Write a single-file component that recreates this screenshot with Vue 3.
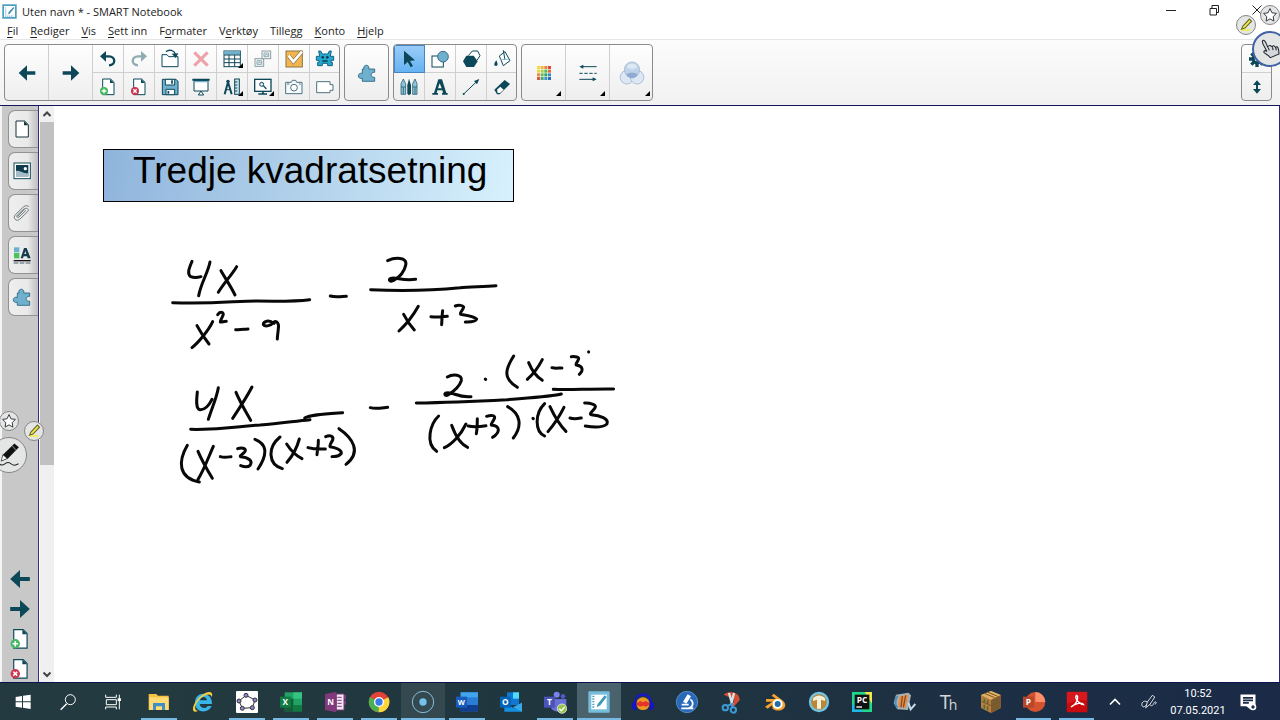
<script setup>
const D = '#0c4858'
const L = '#6fb0cf'

const page = `<path d="M-16-24H8L18-14V23H-16Z" fill="#fff" stroke="${D}" stroke-width="3"/><path d="M6-24L18-12H6Z" fill="${D}"/>`
const puzzle = `<path d="M-14-12H-9C-14-27 10-27 5-12H23V-2C9-4 9 15 23 13V25H-14V16C-30 20-30-3-14 1Z" fill="${L}" stroke="#24627a" stroke-width="2.5"/>`
const arrow = `<path d="M-25 0L0-23V-5H25V5H0V23Z" fill="${D}"/>`
const art = {
  logo: '<rect x="-22" y="-22" width="44" height="44" fill="#fff" stroke="#4d9fc0" stroke-width="6"/><path d="M-13-14V16H14" fill="none" stroke="#75b9d6" stroke-width="4" stroke-dasharray="4 3"/><path d="M14-16L-3 2L-5 10L2 6L17-12Z" fill="#438fb0"/>',
  back: arrow,
  forward: `<g transform="scale(-1 1)">${arrow}</g>`,
  undo: `<path d="M-12-8H3C24-7 24 18 3 19" fill="none" stroke="${D}" stroke-width="7"/><path d="M-24-8L-6-24V8Z" fill="${D}"/>`,
  redo: '<path d="M12-8H-3C-24-7-24 18-3 19" fill="none" stroke="#8fabb3" stroke-width="7"/><path d="M24-8L6-24V8Z" fill="#8fabb3"/>',
  open: `<path d="M-24 23V-13h15l5 6H24V23Z" fill="#fff" stroke="${D}" stroke-width="3"/><path d="M-12-22C-2-30 12-26 16-15" fill="none" stroke="${D}" stroke-width="4"/><path d="M5-16L25-17L17-3Z" fill="${D}"/>`,
  remove: '<path d="M-20-20L20 20M20-20L-20 20" stroke="#eda1a9" stroke-width="9"/>',
  table: `<rect x="-24" y="-24" width="49" height="47" fill="#fff" stroke="${D}" stroke-width="3"/><path d="M-23-23H24V-13H-23Z" fill="${L}"/><path d="M-24-12H24M-24 0H24M-24 11H24M-9-12V23M8-12V23" stroke="${D}" stroke-width="3"/>`,
  clone: '<g fill="#f4f7f8" stroke="#8d9da3" stroke-width="3"><rect x="-24" y="-1" width="26" height="23"/><rect x="-3" y="-24" width="26" height="23"/></g><path d="M-18 5h14v11h-14ZM3-18H17V-7H3Z" fill="none" stroke="#8faab4" stroke-width="3"/><path d="M-16 14l5-6l3 4l4-3M5-9l5-6l3 4l4-3" fill="none" stroke="#8faab4" stroke-width="3"/>',
  check: '<rect x="-24" y="-24" width="49" height="48" fill="#f2b64f" stroke="#8e7445" stroke-width="3"/><path d="M-16-10L-2 8L24-22" fill="none" stroke="#8e7445" stroke-width="12"/><path d="M-16-10L-2 8L24-22" fill="none" stroke="#fff" stroke-width="8"/>',
  monster: '<path d="M-19-24h6l5 9H8l5-9h6l-3 16h10V4H18V10h4v10H8V13H-8v7H-22V10h4V4H-26V-8h10Z" fill="#26a9d0" stroke="#146480" stroke-width="3"/><circle cx="-7" cy="-5" r="4" fill="#0c3c50"/><circle cx="7" cy="-5" r="4" fill="#0c3c50"/><path d="M-8 6H8" stroke="#0c3c50" stroke-width="4"/>',
  add: `${page}<circle cx="-12" cy="12" r="12" fill="#45b863"/><path d="M-19 12H-5M-12 5V19" stroke="#fff" stroke-width="4"/>`,
  del: `${page}<circle cx="-12" cy="12" r="12" fill="#cf3550"/><path d="M-17 7L-7 17M-7 7L-17 17" stroke="#fff" stroke-width="4"/>`,
  save: `<path d="M-23-23H18L24-17V23H-23Z" fill="${L}" stroke="${D}" stroke-width="3"/><path d="M-14-23H14V-6H-14ZM-12 23V7H14V23Z" fill="#f5fbfd" stroke="${D}" stroke-width="3"/><path d="M6-20V-10M-5 12v8" stroke="${D}" stroke-width="5"/>`,
  shade: `<path d="M-21-20V12H21V-20Z" fill="#fff" stroke="${D}" stroke-width="3"/><path d="M-26-22H26" stroke="${D}" stroke-width="6"/><path d="M-20-16H20" stroke="${L}" stroke-width="4"/><path d="M0 12L-8 24H8Z" fill="#fff" stroke="${D}" stroke-width="3"/>`,
  measure: `<path d="M-12-15L-22 22M-12-15L-1 22" stroke="${D}" stroke-width="6"/><path d="M-20 8H-5" stroke="${D}" stroke-width="3"/><circle cx="-12" cy="-17" r="5" fill="${D}"/><rect x="8" y="-24" width="14" height="46" fill="#cfe3eb" stroke="${D}" stroke-width="3"/><path d="M9-15h7M9-6h7M9 3h7M9 12h7" stroke="${D}" stroke-width="3"/>`,
  monitor: `<rect x="-25" y="-23" width="49" height="36" fill="#fff" stroke="${D}" stroke-width="4"/><path d="M-14 21H12M0 13V21" stroke="${D}" stroke-width="5"/><circle cx="-4" cy="-8" r="6" fill="#d8edf5" stroke="${D}" stroke-width="3"/><path d="M1-4L10 6" stroke="${D}" stroke-width="4"/>`,
  camera: '<path d="M-25-14H-8l3-6H5l3 6H24V20H-25Z" fill="#f3fafd" stroke="#4f7180" stroke-width="3"/><circle cy="2" r="10" fill="#fff" stroke="#4f7180" stroke-width="3"/><path d="M-21-9h7M15-9h5" stroke="#4f7180" stroke-width="3"/>',
  video: '<path d="M-25-16H15V-7H24V10H15V17H-25Z" fill="#fff" stroke="#4f7180" stroke-width="3" stroke-linejoin="round"/>',
  puzzle,
  select: `<path d="M-15-25L18 4L3 6L12 21L5 25L-4 9L-15 18Z" fill="${D}"/>`,
  shape: `<rect x="-24" y="-9" width="34" height="33" fill="#fff" stroke="${D}" stroke-width="3"/><circle cx="9" cy="-7" r="16" fill="${L}" stroke="#376f87" stroke-width="3"/>`,
  polygon: `<path d="M-8-10L4-24H20L27-10L18 4" fill="#fff" stroke="${D}" stroke-width="3"/><path d="M-14-10H8L20 7L9 24H-14L-24 7Z" fill="${D}"/>`,
  fill: `<path d="M-8-9L9-22L24 5L4 20Z" fill="#fff" stroke="${D}" stroke-width="3"/><path d="M4-26L9 3" stroke="${D}" stroke-width="3"/><path d="M-7 1L21 1" stroke="#88bfd3" stroke-width="3"/><path d="M-17 4C-27 17-23 21-18 21C-12 21-12 15-17 4Z" fill="${D}"/>`,
  pens: `<path d="M-24-10L-17-24L-10-10V22H-24Z" fill="#8fc3da" stroke="${D}" stroke-width="2"/><path d="M-5-5L0-25L6-5V20L0 25L-5 20Z" fill="${D}"/><path d="M11-10L18-24L24-10V22H11Z" fill="#8fc3da" stroke="${D}" stroke-width="2"/><path d="M-24 0H-10M11 0H24M-17 1V21M18 1V21" stroke="${D}" stroke-width="2"/>`,
  text: `<path d="M-5-23H6L19 18H23V23H6V18H9L7 10H-8L-10 18H-6V23H-23V18H-18Z" fill="${D}"/><path d="M-1-11L5 4H-6Z" fill="#f4f4f4"/>`,
  line: `<path d="M-22 21L20-19" stroke="${D}" stroke-width="3"/><circle cx="-22" cy="21" r="3" fill="${D}"/><path d="M25-24L9-18L18-8Z" fill="${D}"/>`,
  eraser: `<path d="M-23 8L8-21L24-9L-7 22H-15Z" fill="${D}"/><path d="M-15 8L-5-1L5 8L-6 18H-13Z" fill="#fff"/>`,
  colors: [['#f3d84a', '#f0b53c', '#e9813d', '#d94c3c'], ['#e7d845', '#b4cf44', '#58b84e', '#e46a35'], ['#ee8748', '#65bd5a', '#35a260', '#3a8bc5'], ['#d95b3e', '#46a876', '#3b93c9', '#2d6fae']]
    .map((r, y) => r.map((c, x) => `<rect x="${-21 + x * 11}" y="${-21 + y * 11}" width="9" height="9" fill="${c}"/>`).join('')).join(''),
  lines: `<path d="M-18-19H26M-26 19H18" stroke="${D}" stroke-width="3"/><path d="M-26 1H26" stroke="${D}" stroke-width="3" stroke-dasharray="10 5"/><path d="M-26-19L-14-25V-13ZM26 19L14 13V25Z" fill="${D}"/>`,
  venn: '<g stroke="#a3b7cf" stroke-width="2"><circle cx="-12" cy="10" r="16" fill="#dce7f4"/><circle cx="12" cy="10" r="16" fill="#dce7f4"/><circle cx="0" cy="-8" r="18" fill="#b9cfe8" fill-opacity=".85"/></g><path d="M-14 4C-8-2 8-2 14 4C8 15-8 15-14 4Z" fill="#8facd0"/><ellipse cx="0" cy="-16" rx="11" ry="6" fill="#e2edf8" fill-opacity=".8"/>',
  gear: `<g fill="${D}"><circle r="16"/><path d="M-5-24H5V24H-5ZM-24-5V5H24V-5Z"/><path d="M-5-24H5V24H-5ZM-24-5V5H24V-5Z" transform="rotate(45)"/></g><circle r="7" fill="#f7f7f7"/>`,
  height: `<path d="M0-20L12-6H3V6H12L0 20L-12 6H-3V-6H-12Z" fill="${D}"/>`,
  page: `<path d="M-18-24H8L19-13V24H-18Z" fill="#fff" stroke="#17343f" stroke-width="3"/><path d="M6-24L19-11H6Z" fill="#17343f"/>`,
  gallery: `<rect x="-24" y="-24" width="49" height="47" fill="#fff" stroke="${D}" stroke-width="3"/><rect x="-18" y="-18" width="37" height="34" fill="#103a4d"/><path d="M-18 0C-4-4 2 10 19 6V16H-18Z" fill="#a3bcc7"/><circle cx="10" cy="-7" r="5" fill="#fff"/>`,
  clip: '<path d="M-12 9L8-12C14-18 23-11 17-4L-7 19C-17 27-29 15-20 5L3-17C11-25 19-22 21-18M12-8L-9 12C-15 16-18 10-14 6L8-14" fill="none" stroke="#6f7a7e" stroke-width="3"/>',
  props: `<rect x="-24" y="-23" width="16" height="15" fill="${L}"/><rect x="-24" y="-6" width="16" height="16" fill="#4bc35b"/><path d="M-4 10L6-21H14L26 10H17L15 4H5L3 10ZM7-3H13L10-12Z" fill="#173d4d" fill-rule="evenodd"/><path d="M-25 17H26" stroke="#111" stroke-width="4"/><path d="M-25 24H26" stroke="#7d8d94" stroke-width="5" stroke-dasharray="14 4"/>`,
  star: '<path d="M0-20L6-7L20-5L10 5L12 19L0 12L-12 19L-10 5L-20-5L-6-7Z" fill="#fff" stroke="#30343a" stroke-width="3"/>',
  marker: '<path d="M-15 14H12" stroke="#f5f04a" stroke-width="5"/><path d="M10-17L16-11L-3 9L-13 12L-9 3Z" fill="#f3ea43" stroke="#63642e" stroke-width="3"/>',
  pen: '<path d="M16-34L29-23L-3 10L-21 17L-18-1Z" fill="#111"/><path d="M-18-1L-5 10L-23 18Z" fill="#fff" stroke="#222" stroke-width="2"/><path d="M10-26L20-15" stroke="#777" stroke-width="3"/><path d="M-27 27C-16 38-9 15 3 24S16 31 28 26" fill="none" stroke="#222" stroke-width="3"/>',
  hand: '<path d="M-22-23C-18-29-12-22-7-6C0-14 3-8 6-6C11-13 14-7 16-4C22-11 25-2 26 14L1 25C-5 15-16 14-18 9C-17 3-11 4-9 7C-15-6-23-14-22-23Z" fill="#d6d8dc" stroke="#20252d" stroke-width="3"/><path d="M-5-4L-2 4M7-5L9 3M17-3L18 4" stroke="#20252d" stroke-width="3"/>',
  windows: '<path d="M-22-15L-3-18V-2H-22ZM0-19L23-22V-2H0ZM-22 1H-3V17L-22 14ZM0 1H23V21L0 17Z" fill="#fff"/>',
  search: '<circle cx="7" cy="-7" r="15" fill="none" stroke="#fff" stroke-width="3"/><path d="M-4 5L-22 23" stroke="#fff" stroke-width="4"/>',
  tasks: '<path d="M-22-22V-14H10V-22M-22 22V15H10V22M-20-7H10V8H-20ZM19-22V22" fill="none" stroke="#fff" stroke-width="3"/><path d="M14-11H24V-3H14Z" fill="#fff"/>',
  folder: '<path d="M-31-24H-8L-3-19H29V24H-31Z" fill="#f5bf41"/><path d="M-29-14H29V24H-29Z" fill="#ffda75"/><path d="M-18 24V3H18V24H9V13H-9V24Z" fill="#3e8fc4"/>',
  ie: '<path d="M27 6H-10C-8 21 10 21 14 12H26C17 36-24 34-24 2C-24-34 28-34 27 6ZM-9-5H12C9-18-6-18-9-5Z" fill="#3ab5e8" fill-rule="evenodd"/><path d="M-15 27C-40 38-32 4-7-17C12-34 34-35 26-14C25-27 9-24-7-11C-24 5-30 24-15 27Z" fill="#f7cf3e"/>',
  geo: '<rect x="-33" y="-33" width="66" height="66" rx="3" fill="#fff"/><path d="M-3-20L24-6L16 17L-14 19L-24-3Z" fill="none" stroke="#333" stroke-width="3"/><g fill="#8887d0" stroke="#333" stroke-width="3"><circle cx="-3" cy="-20" r="6"/><circle cx="24" cy="-6" r="6"/><circle cx="16" cy="17" r="6"/><circle cx="-14" cy="19" r="6"/><circle cx="-24" cy="-3" r="6"/></g>',
  excel: '<rect x="-19" y="-29" width="52" height="57" fill="#21a366"/><path d="M7-29H33V-10H7Z" fill="#33c481"/><path d="M-19-10H7V28H-19Z" fill="#185c37"/><path d="M7 9H33V28H7Z" fill="#107c41"/><rect x="-33" y="-16" width="33" height="33" fill="#107c41"/><text x="-17" y="9" class="app-letter">X</text>',
  onenote: '<path d="M-30-24L4-31V31L-30 24Z" fill="#80397b"/><path d="M4-24H27V24H4Z" fill="#f4e9f3" stroke="#80397b" stroke-width="3"/><path d="M7-14H20M7-5H20M7 4H20M7 13H20" stroke="#80397b" stroke-width="3"/><path d="M27-21H33V-8H27ZM27-4H33V8H27Z" fill="#80397b"/><text x="-13" y="9" class="app-letter">N</text>',
  chrome: '<circle r="31" fill="#e34337"/><path d="M0 0L-27-15A31 31 0 0 0-1 31L14 6Z" fill="#4caf50"/><path d="M0 0L28-14A31 31 0 0 1-1 31Z" fill="#fdd63c"/><circle r="15" fill="#fff"/><circle r="11" fill="#397be8"/>',
  record: '<circle r="32" fill="none" stroke="#86bddc" stroke-width="3"/><circle r="11" fill="#74c1ee"/>',
  word: '<rect x="-19" y="-29" width="52" height="57" fill="#2b7cd3"/><path d="M-19-29H33V-14H-19Z" fill="#41a5ee"/><path d="M-19 9H33V28H-19Z" fill="#103f91"/><rect x="-33" y="-16" width="33" height="33" fill="#185abd"/><text x="-17" y="8" class="app-letter small">W</text>',
  outlook: '<path d="M-12-29H24V9H-12Z" fill="#0f78d4"/><path d="M6-29H24V-10H6Z" fill="#50d9ff"/><path d="M-20 2L7 17L33 2V29H-20Z" fill="#1490df"/><path d="M7 15L33 2V29Z" fill="#38a9e8"/><rect x="-33" y="-16" width="33" height="33" fill="#0364b8"/><text x="-17" y="9" class="app-letter">O</text>',
  teams: '<circle cx="5" cy="-22" r="9" fill="#7b83eb"/><circle cx="24" cy="-17" r="7" fill="#5059c9"/><path d="M-11-9H34V10C34 30 2 35-11 20Z" fill="#6870d5"/><rect x="-33" y="-16" width="33" height="33" fill="#4b53bc"/><text x="-17" y="9" class="app-letter">T</text><circle cx="21" cy="20" r="14" fill="#94c349" stroke="#fff" stroke-width="2"/><path d="M13 20L19 26L29 15" fill="none" stroke="#fff" stroke-width="4"/>',
  notebook: '<rect x="-32" y="-32" width="64" height="64" rx="3" fill="#76bddb"/><rect x="-23" y="-22" width="46" height="44" fill="#fff"/><path d="M-17-19V18" stroke="#4d9fc0" stroke-width="6" stroke-dasharray="4 4"/><path d="M17-20L-4 6L-7 16L4 10L23-15Z" fill="#4097ba"/>',
  audacity: '<ellipse cy="5" rx="20" ry="19" fill="#ef9925"/><path d="M-19 3L-8-3L0 1L8-3L19 3V9L8 14L0 11L-8 14L-19 9Z" fill="#e6332a"/><path d="M-24 12C-30-34 30-34 24 12" fill="none" stroke="#1818c4" stroke-width="7"/><path d="M-32 2H-20V25C-35 25-33 12-32 2ZM32 2H20V25C35 25 33 12 32 2Z" fill="#1613c9"/>',
  scope: '<circle r="32" fill="#2868b9" stroke="#72a6dc" stroke-width="2"/><path d="M2-23L12-17L-2 5L-12-1Z" fill="#fff"/><path d="M-16 8H5M-17 19H19M10-8C22 0 18 17 5 18" fill="none" stroke="#fff" stroke-width="5"/>',
  snip: '<path d="M-22-22C-5-38 28-29 26-5L7 15L-1 8C18-2 7-20-7-15Z" fill="#d34c36"/><path d="M-6-27L4 8M9-27L0 9" stroke="#d9e3e8" stroke-width="7"/><g fill="none" stroke="#3d9bd5" stroke-width="6"><circle cx="-17" cy="17" r="8"/><circle cx="7" cy="24" r="8"/><path d="M-10 11L3 6L4 16"/></g>',
  blender: '<path d="M-30 14L-8-1H-27V-9H3L-10-19L-4-25L24-4C45 17 13 35-7 20L-9 10L-22 20Z" fill="#f5a12c"/><circle cx="8" cy="6" r="15" fill="#fff"/><circle cx="8" cy="6" r="9" fill="#236ba4"/>',
  top: '<circle r="27" fill="#b98735" stroke="#72c3e4" stroke-width="7"/><path d="M-18-11C-8-22 7-23 18-11V-3L6-7V20H-6V-7L-18-3Z" fill="#f5f1d8"/>',
  pycharm: '<path d="M-30-30H30V30H-30Z" fill="#21d789"/><path d="M8-30H30V5Z" fill="#f2e84c"/><path d="M-30 5V30H5Z" fill="#20b7e6"/><rect x="-22" y="-22" width="44" height="44" fill="#111"/><text x="0" y="2" class="app-letter">PC</text><path d="M-17 15H0" stroke="#fff" stroke-width="4"/>',
  reel: '<path d="M-27-22L10-28L18-20L9 24L-23 22L-34 3Z" fill="#a7b1b3"/><path d="M-18-16L10-22L2 17L-20 15Z" fill="#f08a39"/><path d="M-8-18L-12 16M2-20L-5 16" stroke="#7a4f38" stroke-width="4"/><path d="M-22-18C-32-6-30 10-22 17" fill="none" stroke="#4b91c0" stroke-width="6"/><path d="M10 2L17 22L31 6" fill="none" stroke="#c1dce8" stroke-width="6"/>',
  thonny: '<text x="-8" y="22" class="thin-letter">T</text><text x="15" y="24" class="thin-letter lower">h</text>',
  block: '<path d="M0-33L29-21V18L0 33L-30 18V-21Z" fill="#b5803f"/><path d="M0-7V33L29 18V-21Z" fill="#89562d"/><path d="M0-33L29-21L0-7L-30-21Z" fill="#dfb266"/><path d="M-20-10V2M-10-6V7M-20 8V20M-10 13V25M10-5V8M20-9V3M10 13V25M20 8V20" stroke="#5b6a35" stroke-width="5"/><path d="M-29-2L0 11L29-2M-20-26L11-13M-11-30L20-17" fill="none" stroke="#7b5428" stroke-width="3"/>',
  powerpoint: '<circle cx="4" r="30" fill="#d35230"/><path d="M4-30A30 30 0 0 1 34 0H4Z" fill="#ff8f6b"/><rect x="-33" y="-16" width="33" height="33" fill="#b7472a"/><text x="-17" y="9" class="app-letter">P</text>',
  acrobat: '<rect x="-31" y="-31" width="62" height="62" rx="3" fill="#c90b10"/><path d="M-30-30H30V-4C6-10-8 0-30 5Z" fill="#e4282d" opacity=".5"/><path d="M-18 15C3 5 4-18-1-20C-9-14 5 7 20 8C17 0-5 3-18 15Z" fill="none" stroke="#fff" stroke-width="4"/>'
}

const menus = [['', 'F', 'il'], ['', 'R', 'ediger'], ['', 'V', 'is'], ['', 'S', 'ett inn'], ['F', 'o', 'rmater'], ['V', 'e', 'rktøy'], ['Tille', 'g', 'g'], ['', 'K', 'onto'], ['', 'H', 'jelp']]

const nav = [{ i: 'back', t: 'Forrige side' }, { i: 'forward', t: 'Neste side' }]
const fileTools = [
  { i: 'undo', t: 'Angre' }, { i: 'redo', t: 'Gjør om' }, { i: 'open', t: 'Åpne' }, { i: 'remove', t: 'Slett' },
  { i: 'table', t: 'Tabell', m: true }, { i: 'clone', t: 'Klon' }, { i: 'check', t: 'Vurdering' }, { i: 'monster', t: 'Aktivitet' },
  { i: 'add', t: 'Ny side' }, { i: 'del', t: 'Slett side' }, { i: 'save', t: 'Lagre' }, { i: 'shade', t: 'Skjermskjuler' },
  { i: 'measure', t: 'Måleverktøy', m: true }, { i: 'monitor', t: 'Visning', m: true }, { i: 'camera', t: 'Skjermbilde' }, { i: 'video', t: 'Opptak' }
]
const drawTools = [
  { i: 'select', t: 'Merk', on: true }, { i: 'shape', t: 'Former' }, { i: 'polygon', t: 'Mangekanter' }, { i: 'fill', t: 'Fyll' },
  { i: 'pens', t: 'Penner' }, { i: 'text', t: 'Tekst' }, { i: 'line', t: 'Linjer' }, { i: 'eraser', t: 'Viskelær' }
]
const styleTools = [{ i: 'colors', t: 'Farge', m: true }, { i: 'lines', t: 'Linjestil', m: true }, { i: 'venn', t: 'Gjennomsiktighet', m: true }]
const endTools = [{ i: 'gear', t: 'Innstillinger' }, { i: 'height', t: 'Flytt verktøylinje' }]

const tabs = [{ i: 'page', t: 'Sider' }, { i: 'gallery', t: 'Galleri' }, { i: 'clip', t: 'Vedlegg' }, { i: 'props', t: 'Egenskaper' }, { i: 'puzzle', t: 'Tillegg' }]
const pageTools = [{ i: 'back', t: 'Forrige' }, { i: 'forward', t: 'Neste' }, { i: 'add', t: 'Legg til side' }, { i: 'del', t: 'Fjern side' }]

const system = [{ i: 'windows', t: 'Start' }, { i: 'search', t: 'Søk' }, { i: 'tasks', t: 'Oppgavevisning' }]
const apps = [
  { i: 'folder', t: 'Filutforsker', r: true }, { i: 'ie', t: 'Internet Explorer' }, { i: 'geo', t: 'GeoGebra', r: true },
  { i: 'excel', t: 'Excel', r: true }, { i: 'onenote', t: 'OneNote', r: true }, { i: 'chrome', t: 'Chrome', r: true },
  { i: 'record', t: 'Opptaker', r: true, dim: true }, { i: 'word', t: 'Word', r: true }, { i: 'outlook', t: 'Outlook' },
  { i: 'teams', t: 'Teams', r: true }, { i: 'notebook', t: 'SMART Notebook', r: true, on: true }, { i: 'audacity', t: 'Audacity' },
  { i: 'scope', t: 'Mikroskop' }, { i: 'snip', t: 'Utklippsverktøy' }, { i: 'blender', t: 'Blender' }, { i: 'top', t: 'Tracker' },
  { i: 'pycharm', t: 'PyCharm' }, { i: 'reel', t: 'Filmverktøy' }, { i: 'thonny', t: 'Thonny' }, { i: 'block', t: 'Minetest' },
  { i: 'powerpoint', t: 'PowerPoint', r: true }, { i: 'acrobat', t: 'Acrobat', r: true }
]

const firstLine = [
  'M96 64C88 84 80 100 92 110C102 114 116 112 123 110M150 66C144 98 122 132 116 167',
  'M183 92C194 112 212 138 225 165M230 80C214 106 190 132 175 157',
  'M38 188C150 193 230 183 290 183C350 184 410 184 449 179',
  'M111 257C122 278 136 298 147 312M158 245C146 271 115 308 96 323',
  'M173 224C180 212 195 216 188 228C186 236 180 240 181 246C187 246 192 244 199 244',
  'M227 269C240 270 250 268 264 267',
  'M342 250C326 238 310 244 310 254C316 262 334 256 340 248C350 240 358 250 355 266C354 280 352 288 352 297',
  'M511 168C524 172 538 170 559 169',
  'M683 62C704 52 744 50 737 76C733 94 720 110 702 121C690 128 684 118 692 115C710 110 726 124 767 118',
  'M632 149C760 155 850 148 900 143C930 139 970 141 1008 137',
  'M731 223C741 242 752 258 763 270M775 199C760 226 738 254 717 273',
  'M813 230C830 233 846 231 862 229M848 212C846 227 846 240 845 254',
  'M886 198C896 194 908 196 911 201C910 210 898 218 902 223C920 226 940 228 950 237C944 248 926 246 916 246'
]
const secondLine = [
  'M82 156C80 176 76 206 90 209C106 210 118 194 126 178M145 143C140 174 124 208 115 238',
  'M198 157C210 186 228 216 242 241M246 141C230 172 206 208 188 235',
  'M62 268C170 270 200 258 270 255C330 250 370 244 420 239',
  'M404 234C420 224 460 222 518 218',
  'M601 203C616 207 632 204 653 202',
  'M52 316C24 364 24 414 88 426M84 334C96 362 112 390 127 415M130 319C116 350 102 390 84 418',
  'M151 350C162 354 170 352 183 350M203 326C218 320 234 328 222 338C216 344 208 348 212 350C234 352 250 362 240 376C232 384 220 380 212 377',
  'M255 298C286 310 298 336 264 387M330 291C292 322 294 374 337 386',
  'M350 312C364 334 380 348 396 356M388 297C380 326 366 350 351 367M414 323C432 328 448 328 466 327M445 301C446 316 442 330 441 344',
  'M467 290C480 284 492 288 488 300C484 308 478 316 480 320C496 322 516 330 514 340C506 352 494 348 486 350M507 266C548 294 576 336 528 373',
  'M832 111C850 100 878 104 874 122C868 140 848 156 834 165C824 170 820 158 832 158C850 156 866 174 903 170',
  'M946 117L947 118M1031 48C1006 88 998 114 1042 142',
  'M1076 68C1086 92 1102 112 1117 121M1117 59C1104 84 1086 106 1072 118M1146 83C1156 86 1164 84 1176 84',
  'M1204 50C1216 48 1228 52 1226 57C1222 66 1216 74 1219 75C1238 78 1242 90 1228 103M1256 35L1256 36',
  'M739 189C850 187 930 183 1010 179C1070 174 1150 169 1174 162',
  'M1150 148C1200 151 1250 146 1331 147',
  'M806 228C782 250 764 310 800 334M845 256C856 286 874 314 893 322M888 252C872 286 844 314 823 323',
  'M895 258C914 262 930 260 948 257M922 236C922 252 922 266 919 281',
  'M950 229C964 224 978 226 973 236C968 248 960 254 966 256C990 258 992 276 968 292M1013 200C1052 222 1058 258 1030 294',
  'M1089 235L1090 236M1124 191C1094 220 1094 274 1124 288',
  'M1140 200C1154 230 1170 256 1188 274M1182 202C1168 230 1150 256 1134 275M1200 234C1212 238 1222 236 1234 234',
  'M1244 189C1260 188 1280 194 1276 202C1270 214 1256 220 1264 224C1290 226 1318 236 1311 252C1300 262 1270 262 1246 258'
]
</script>

<template>
  <div class="screen">
    <header class="titlebar">
      <svg class="logo" viewBox="-26 -26 52 52" v-html="art.logo"></svg>
      <span class="caption">Uten navn * - SMART Notebook</span>
      <div class="window-controls">
        <button aria-label="Minimer"><svg viewBox="0 0 12 12"><path d="M1 6.500H11" /></svg></button>
        <button aria-label="Gjenopprett"><svg viewBox="0 0 12 12"><path d="M2 4.500H8.500V11H2ZM4 4V1.500H10.500V8.500H9" /></svg></button>
        <button aria-label="Lukk"><svg viewBox="0 0 12 12"><path d="M1.500 1.500L10.500 10.500M10.500 1.500L1.500 10.500" /></svg></button>
      </div>
    </header>

    <nav class="menubar">
      <button v-for="m in menus" :key="m.join('')">{{ m[0] }}<u>{{ m[1] }}</u>{{ m[2] }}</button>
    </nav>

    <section class="toolbar">
      <div class="group">
        <div class="wide-cells split">
          <button v-for="b in nav" :key="b.i" class="tool" :aria-label="b.t"><svg class="glyph" viewBox="-33 -33 66 66" v-html="art[b.i]"></svg></button>
        </div>
        <div class="cells eight">
          <button v-for="b in fileTools" :key="b.i" class="tool" :class="{ more: b.m }" :aria-label="b.t"><svg class="glyph" viewBox="-33 -33 66 66" v-html="art[b.i]"></svg></button>
        </div>
      </div>
      <div class="group">
        <div class="wide-cells single">
          <button class="tool" aria-label="Tillegg"><svg class="glyph" viewBox="-33 -33 66 66" v-html="art.puzzle"></svg></button>
        </div>
      </div>
      <div class="group">
        <div class="cells four">
          <button v-for="b in drawTools" :key="b.i" class="tool" :class="{ active: b.on }" :aria-label="b.t"><svg class="glyph" viewBox="-33 -33 66 66" v-html="art[b.i]"></svg></button>
        </div>
      </div>
      <div class="group">
        <div class="wide-cells">
          <button v-for="b in styleTools" :key="b.i" class="tool" :class="{ more: b.m, large: b.i === 'venn' }" :aria-label="b.t"><svg class="glyph" viewBox="-33 -33 66 66" v-html="art[b.i]"></svg></button>
        </div>
      </div>
      <div class="group end">
        <div class="cells one">
          <button v-for="b in endTools" :key="b.i" class="tool" :aria-label="b.t"><svg class="glyph" viewBox="-33 -33 66 66" v-html="art[b.i]"></svg></button>
        </div>
      </div>
    </section>

    <main class="workspace">
      <aside class="sidebar">
        <div class="tabs">
          <button v-for="b in tabs" :key="b.i" class="tab" :aria-label="b.t"><svg class="glyph" viewBox="-33 -33 66 66" v-html="art[b.i]"></svg></button>
        </div>
        <div class="page-tools">
          <button v-for="b in pageTools" :key="b.i" :aria-label="b.t"><svg class="glyph" viewBox="-28 -28 56 56" v-html="art[b.i]"></svg></button>
        </div>
        <button class="bubble left-star" aria-label="Favoritter"><svg viewBox="-28 -28 56 56" v-html="art.star"></svg></button>
        <button class="bubble left-pen" aria-label="Penn"><svg viewBox="-50 -50 100 100" v-html="art.pen"></svg></button>
        <button class="bubble left-marker" aria-label="Merkepenn"><svg viewBox="-26 -26 52 52" v-html="art.marker"></svg></button>
      </aside>
      <div class="scrollbar">
        <button aria-label="Rull opp"><svg viewBox="0 0 14 14"><path d="M3.500 9L7 5.500L10.500 9" /></svg></button>
        <div class="track"><div class="thumb"></div></div>
        <button aria-label="Rull ned"><svg viewBox="0 0 14 14"><path d="M3.500 5.500L7 9L10.500 5.500" /></svg></button>
      </div>
      <article class="canvas">
        <h1>Tredje kvadratsetning</h1>
        <svg class="ink" viewBox="160 240 480 260" role="img" aria-label="4x/(x²−9) − 2/(x+3)">
          <g transform="translate(160 240) scale(.3333)"><path v-for="d in firstLine" :key="d" :d="d" /></g>
          <g transform="translate(170 340) scale(.3333)"><path v-for="d in secondLine" :key="d" :d="d" /></g>
        </svg>
      </article>
    </main>

    <footer class="taskbar">
      <div class="system">
        <button v-for="b in system" :key="b.i" :aria-label="b.t"><svg viewBox="-36 -36 72 72" v-html="art[b.i]"></svg></button>
      </div>
      <div class="apps">
        <button v-for="b in apps" :key="b.i" :class="{ running: b.r, focused: b.on, dim: b.dim }" :aria-label="b.t"><svg viewBox="-36 -36 72 72" v-html="art[b.i]"></svg></button>
      </div>
      <div class="tray">
        <button class="chevron" aria-label="Vis skjulte ikoner"><svg viewBox="0 0 24 24"><path d="M6 15L12 9L18 15" /></svg></button>
        <button class="ink-tool" aria-label="Windows Ink"><svg viewBox="0 0 24 24"><path d="M8 19L10 12L16 4L19 6L13 15L8 19M10 12C5 9 2 14 4 17C5 19 8 17 9 15M13 15C15 18 17 16 18 13C20 10 22 13 19 15" /></svg></button>
        <time datetime="2021-05-07T10:52"><span>10:52</span><span>07.05.2021</span></time>
        <button class="notice" aria-label="Varsler"><svg viewBox="0 0 24 24"><path d="M3 3H21V17H15V21L10 17H3Z" fill="#fff" stroke="none" /><path d="M6 7H18M6 10H18M6 13H13" stroke="#1b2b47" /><circle cx="18" cy="18" r="3" fill="#1b2b47" stroke="#fff" /></svg></button>
      </div>
    </footer>

    <button class="bubble right-star" aria-label="Favoritter"><svg viewBox="-28 -28 56 56" v-html="art.star"></svg></button>
    <button class="bubble right-marker" aria-label="Merkepenn"><svg viewBox="-26 -26 52 52" v-html="art.marker"></svg></button>
    <button class="bubble right-hand" aria-label="Pekeverktøy"><svg viewBox="-46 -46 92 92" v-html="art.hand"></svg></button>
  </div>
</template>

<style>
html, body { overflow: hidden; }
body { margin: 0; }
.app-letter { fill: #fff; font: bold 25px "Open Sans", sans-serif; text-anchor: middle; }
.app-letter.small { font-size: 22px; }
.thin-letter { fill: #d5d8d8; font: 60px "Open Sans", sans-serif; text-anchor: middle; }
.thin-letter.lower { font-size: 42px; }
</style>

<style scoped>
.screen { position: relative; display: flex; flex-direction: column; height: 100vh; overflow: hidden; background: #fff; color: #222; font: 11px "Open Sans", "Noto Sans", sans-serif; }
button { display: flex; align-items: center; justify-content: center; padding: 0; border: 0; background: none; color: inherit; font: inherit; }
svg { display: block; flex: none; }

.titlebar { display: flex; align-items: center; flex: none; height: 22px; padding-left: 2px; }
.logo { width: 15px; height: 15px; }
.caption { margin-left: 5px; font-size: 11px; white-space: nowrap; }
.window-controls { display: flex; height: 20px; margin-left: auto; padding-right: 2px; align-self: flex-start; }
.window-controls button { width: 43px; }
.window-controls svg { width: 12px; height: 12px; fill: none; stroke: #222; stroke-width: 1; }

.menubar { display: flex; flex: none; gap: 12px; height: 17px; padding-left: 7px; border-bottom: 1px solid #e6e6e6; }
.menubar button { white-space: pre; }
.menubar u { text-underline-offset: 2px; }

.toolbar { display: flex; flex: none; gap: 4px; padding: 4px 8px 4px 4px; border-bottom: 1px solid #14145a; background: linear-gradient(#fcfcfc, #f1f1f1); }
.group { display: flex; overflow: hidden; box-sizing: border-box; height: 57px; border: 1px solid #8b8b8b; border-radius: 4px; background: linear-gradient(#fefefe, #eeeeee); }
.end { margin-left: auto; }
.wide-cells { display: grid; grid-auto-flow: column; grid-auto-columns: 44px; margin-right: -2px; }
.wide-cells.split { margin-right: 0; }
.wide-cells.single { margin-right: -1px; }
.cells { display: grid; grid-template-rows: 28px 28px; }
.eight { grid-template-columns: repeat(8, 31px); margin-right: -2px; }
.four { grid-template-columns: repeat(4, 31px); margin-right: -2px; }
.one { grid-template-columns: 31px; margin-right: -2px; }
.tool { position: relative; box-sizing: border-box; border-right: 1px solid #cfcfcf; }
.cells .tool { border-bottom: 1px solid #cfcfcf; }
.wide-cells:last-child .tool:last-child { border-right: 0; }
.glyph { width: 22px; height: 22px; }
.large .glyph { width: 28px; height: 28px; }
.tool.more::after { content: ""; position: absolute; right: 4px; bottom: 4px; border-left: 5px solid transparent; border-bottom: 5px solid #000; }
.tool.active { background: linear-gradient(#9dcdf8, #65b3f2); outline: 1px solid #4684c4; outline-offset: -1px; }

.workspace { display: flex; flex: 1; min-height: 0; }
.sidebar { position: relative; display: flex; flex: none; flex-direction: column; justify-content: space-between; box-sizing: border-box; width: 39px; border-left: 2px solid #f4f4f4; border-right: 1px solid #30307f; background: #c8c8c8; }
.tabs { display: flex; flex-direction: column; gap: 4px; padding: 4px 0 0 6px; }
.tab { box-sizing: border-box; height: 38px; padding-right: 3px; border: 1px solid #929292; border-right: 0; border-radius: 7px 0 0 7px; background: linear-gradient(90deg, #eee, #e9e9e9 65%, #bebebe); }
.page-tools { display: flex; flex-direction: column; margin-bottom: -2px; }
.page-tools button { height: 30px; }

.scrollbar { display: flex; flex: none; flex-direction: column; width: 14px; margin-left: 1px; background: #f0f0f0; }
.scrollbar button { height: 16px; }
.scrollbar svg { width: 14px; height: 14px; fill: none; stroke: #444; stroke-width: 2; }
.track { flex: 1; }
.thumb { height: 63%; background: #c1c1c1; }

.canvas { flex: 1; min-width: 0; overflow: hidden; border-right: 1px solid #26267a; background: #fff; }
h1 { box-sizing: border-box; width: fit-content; height: 53px; margin: 43px 0 0 49px; padding: 0 26px 0 29px; border: 1px solid #000; background: linear-gradient(100deg, #8fb4dc, #b2d2eb 50%, #d8f1fd); color: #000; font: 37px/42px "Liberation Sans", Arial, sans-serif; white-space: nowrap; }
.ink { width: 480px; height: 260px; margin: 38px 0 0 106px; fill: none; stroke: #080808; stroke-width: 9; stroke-linecap: round; stroke-linejoin: round; }

.taskbar { display: flex; flex: none; box-sizing: border-box; height: 38px; border-top: 1px solid #0c124e; background: linear-gradient(90deg, #233b40, #20363f 45%, #1a2a47); color: #fff; }
.system { display: flex; }
.system button { width: 45px; }
.system svg, .apps svg { width: 24px; height: 24px; }
.apps { display: flex; flex: none; margin-left: 2px; }
.apps button { position: relative; width: 44px; }
.apps button:nth-child(n + 16) { width: 43px; }
.running::after { content: ""; position: absolute; right: 4px; bottom: 0; left: 4px; height: 2px; background: #76b9e5; }
.apps .dim { background: #33494f; }
.apps .focused { background: #4a626c; }
.focused::after, .dim::after { right: 0; left: 0; }
.tray { display: flex; flex: none; margin-left: auto; padding-right: 14px; }
.tray svg { width: 20px; height: 20px; fill: none; stroke: #fff; stroke-width: 2; }
.chevron, .ink-tool { width: 34px; }
.ink-tool svg { stroke-width: 1; }
.tray time { display: flex; flex-direction: column; justify-content: center; width: 64px; font-family: Roboto, sans-serif; line-height: 17px; text-align: center; }
.notice { width: 36px; }

.bubble { position: absolute; box-sizing: border-box; border: 1px solid #858585; border-radius: 50%; background: #e4e6e6; }
.bubble svg { width: 100%; height: 100%; }
.left-star { top: 305px; left: -3px; width: 20px; height: 20px; }
.left-marker { top: 315px; left: 22px; width: 20px; height: 20px; z-index: 1; }
.left-pen { top: 331px; left: -11px; width: 36px; height: 36px; }
.right-star { top: 5px; right: 0; width: 20px; height: 20px; }
.right-marker { top: 15px; right: 24px; width: 20px; height: 20px; }
.right-hand { top: 31px; right: -8px; width: 36px; height: 36px; border: 2px solid #4262a8; }
</style>
